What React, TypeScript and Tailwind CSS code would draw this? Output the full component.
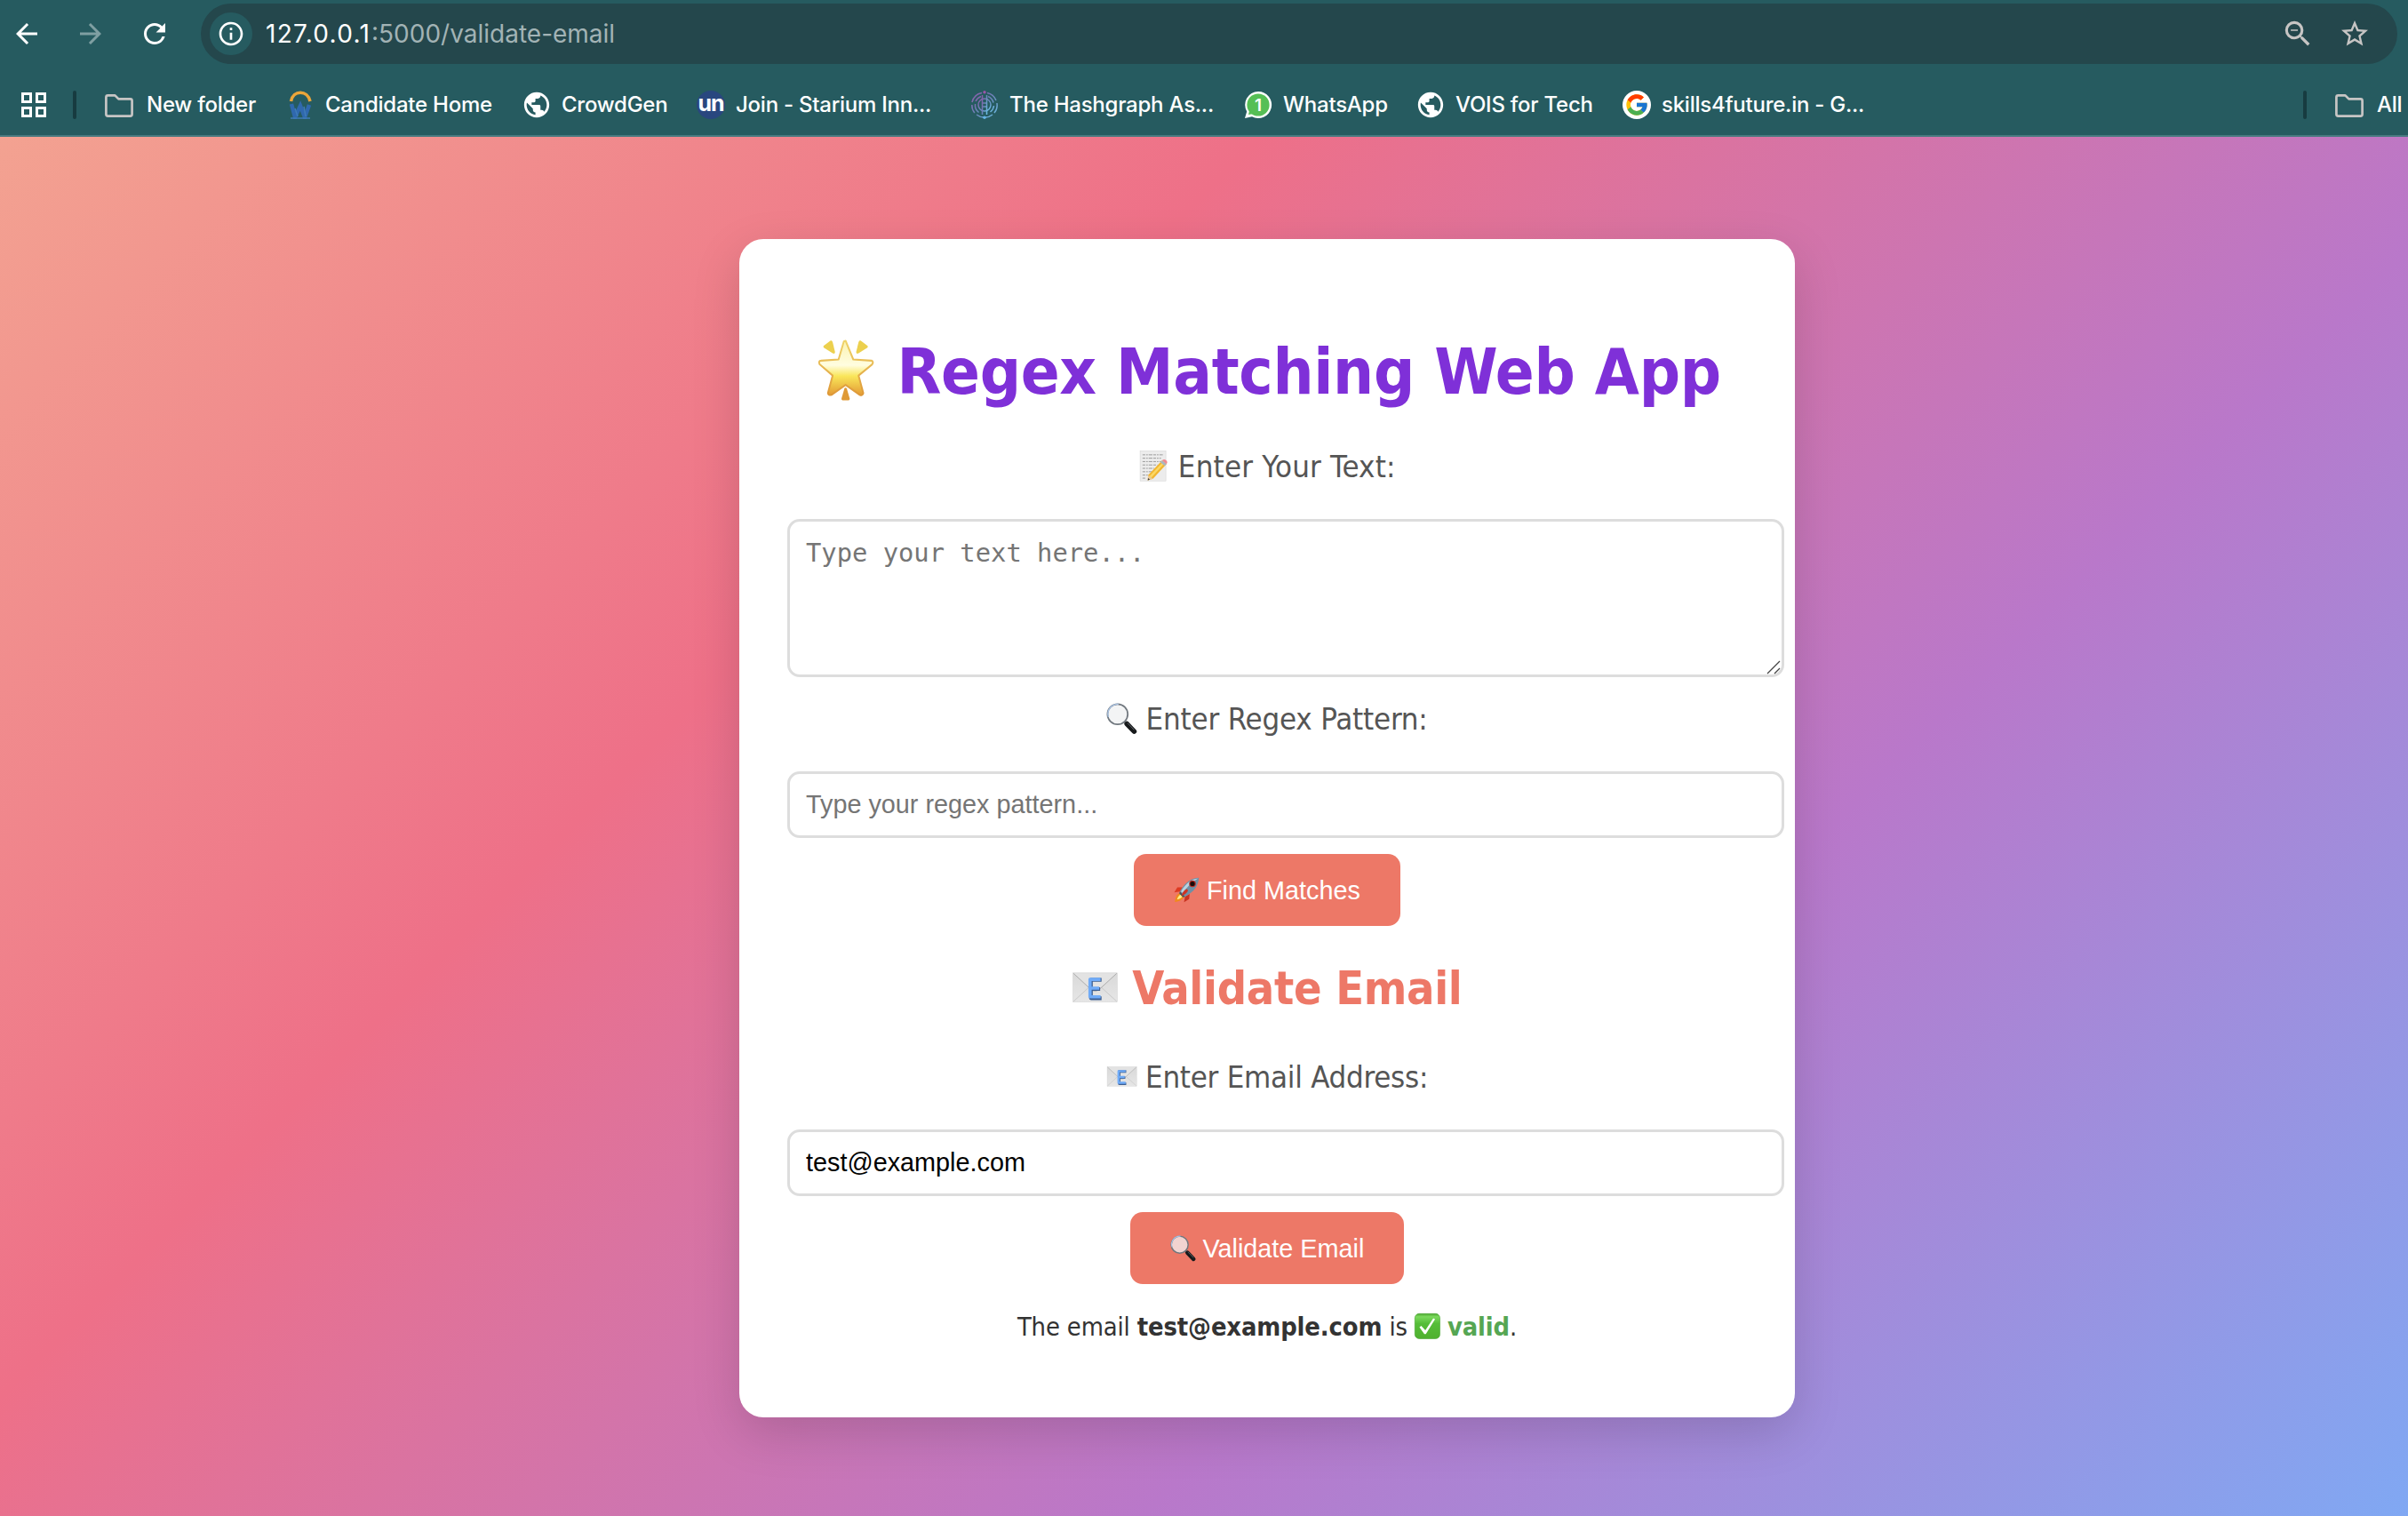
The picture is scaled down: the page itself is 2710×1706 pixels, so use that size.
import type { ReactNode } from "react";
import { MdArrowBack, MdArrowForward, MdInfoOutline, MdPublic, MdRefresh, MdStarOutline, MdZoomOut } from "react-icons/md";
import { FcGoogle } from "react-icons/fc";

const emojiBox = "inline-block h-[1em] w-[1em] align-[-0.125em] overflow-visible";

function GlowingStar() {
  return (
    <svg viewBox="0 0 100 100" className={emojiBox}>
      <defs>
        <linearGradient id="star-fill" x1="0" y1="0" x2="0" y2="1">
          <stop offset="0" stopColor="#fbf3b0" />
          <stop offset="0.45" stopColor="#fffde0" />
          <stop offset="0.65" stopColor="#f9e65a" />
          <stop offset="1" stopColor="#e39a34" />
        </linearGradient>
        <linearGradient id="star-edge" x1="0" y1="0" x2="0" y2="1">
          <stop offset="0" stopColor="#efd46a" />
          <stop offset="1" stopColor="#de9838" />
        </linearGradient>
      </defs>
      <g transform="translate(4 1) scale(0.92 0.97)">
        <path d="M51 4l13 30 31 2c3 1 3 4 1 6L73 60l8 28c0 4-4 4-6 3L51 75 27 91c-3 1-6 0-6-3l8-28L7 42c-2-3-1-6 2-6l30-2L48 5z" fill="url(#star-fill)" stroke="url(#star-edge)" strokeWidth="3" strokeLinejoin="round" />
        <path d="M14 12l11-8c2-1 3 0 4 2l4 16c0 3-2 3-4 2L14 15c-1-1-1-2 0-3z" fill="#ecd04e" />
        <path d="M88 12L77 4c-2-1-3 0-4 2l-4 16c0 3 2 3 4 2l15-9c1-1 1-2 0-3z" fill="#ecd04e" />
        <path d="M49 81c1-2 3-2 4 0l5 16c0 2-1 3-3 3h-8c-2 0-3-1-3-3z" fill="#df9a37" />
      </g>
    </svg>
  );
}

function Memo() {
  return (
    <svg viewBox="0 0 100 100" className={emojiBox}>
      <rect x="6" y="1" width="84" height="98" fill="#ececec" stroke="#d2d2d2" strokeWidth="1.5" />
      <g stroke="#8b8b8b" strokeWidth="2.4" strokeDasharray="9 3 5 3 12 3">
        <path d="M14 14h66M14 25h60M14 36h60M14 47h48M14 58h38M14 69h30M14 80h22M14 90h12" />
      </g>
      <path d="M32 80l46-48 14 12-44 48-17 5z" fill="#f2b631" />
      <path d="M36 84l46-48 5 4-45 49z" fill="#fbd865" />
      <path d="M32 80l16 12-17 5z" fill="#e9c99a" />
      <path d="M31 97l1-7 6 5z" fill="#3a3a3a" />
      <path d="M72 38l6-6 14 12-6 6z" fill="#a9b7c0" />
      <path d="M78 32c4-5 9-4 13 0s5 8 1 12z" fill="#ef8a93" />
    </svg>
  );
}

function Magnifier({ lens }: { lens: string }) {
  return (
    <svg viewBox="0 0 100 100" className={emojiBox}>
      <path d="M60 62l10 11" stroke="#8a8a8a" strokeWidth="7" />
      <path d="M67 68l24 25" stroke="#17191b" strokeWidth="16" strokeLinecap="round" />
      <path d="M70 66l20 21" stroke="#6f757a" strokeWidth="2.5" strokeLinecap="round" />
      <circle cx="37" cy="37" r="33" fill={lens} stroke="#70777e" strokeWidth="5" />
      <path d="M7 46A32 32 0 0 1 40 4" fill="none" stroke="#a9c3e4" strokeWidth="4" />
    </svg>
  );
}

function EmailEnvelope() {
  return (
    <svg viewBox="0 0 100 100" className={emojiBox}>
      <defs>
        <linearGradient id="paper" x1="0" y1="0" x2="0" y2="1">
          <stop offset="0" stopColor="#d9d9d9" />
          <stop offset="1" stopColor="#e6e6e6" />
        </linearGradient>
      </defs>
      <rect x="3" y="19" width="96" height="63" fill="url(#paper)" stroke="#cfcfcf" strokeWidth="1" />
      <path d="M4 81l36-33M98 81L62 48" stroke="#c3c3c3" strokeWidth="1.6" />
      <path d="M4 20l37 34q10 9 20 0l37-34" fill="#e3e3e3" stroke="#a9a9a9" strokeWidth="1.8" />
      <path d="M65 34H42v40h23M42 54h20" fill="none" stroke="#3d5f92" strokeWidth="8" strokeLinejoin="round" />
      <path d="M63 33H40v38h23M40 52h20" fill="none" stroke="#6fabf8" strokeWidth="7" strokeLinejoin="round" />
    </svg>
  );
}

function Rocket() {
  return (
    <svg viewBox="0 0 100 100" className={emojiBox}>
      <path d="M34 40L14 40 2 60l22-4z" fill="#dd3a22" />
      <path d="M62 66l-2 20-20 12 4-22z" fill="#c8321f" />
      <path d="M26 62C10 66 6 82 4 97c14-2 28-6 36-20z" fill="#f08a1c" />
      <path d="M28 68c-9 4-13 12-15 20 9-2 16-5 22-14z" fill="#fff08a" />
      <path d="M98 3C70 4 46 18 24 56l20 20C80 58 96 34 98 3z" fill="#6d90a6" />
      <path d="M96 5C70 8 48 22 28 56l6 6C56 34 76 16 96 5z" fill="#b9d3e0" />
      <path d="M24 56c-2 4-2 6-2 9l13 13c3 0 6-1 9-2z" fill="#46545e" />
      <circle cx="73" cy="26" r="13" fill="#b5271d" />
      <circle cx="73" cy="26" r="9" fill="#160c0c" />
      <path d="M50 46c-12 8-18 18-20 28 12-4 22-12 26-22z" fill="#cf3320" />
    </svg>
  );
}

function CheckBox() {
  return (
    <svg viewBox="0 0 100 100" className={emojiBox}>
      <defs>
        <linearGradient id="check-bg" x1="0" y1="0" x2="0" y2="1">
          <stop offset="0" stopColor="#49a52d" />
          <stop offset="0.12" stopColor="#7bd95c" />
          <stop offset="0.4" stopColor="#55bd38" />
          <stop offset="1" stopColor="#4fb02f" />
        </linearGradient>
      </defs>
      <rect x="1" y="1" width="98" height="98" rx="17" fill="url(#check-bg)" stroke="#43a02b" strokeWidth="2" />
      <path d="M19 54l7-5 16 17L73 19l7 4-36 58h-6z" fill="#fff" />
    </svg>
  );
}

function Folder() {
  return (
    <svg viewBox="0 0 32 32" className="h-8 w-8 shrink-0" fill="none" stroke="#c7c5c4" strokeWidth="2.7" strokeLinejoin="round">
      <path d="M3.4 5.4h8l4 4h13.2q2 0 2 2v15.2q0 2-2 2H3.4q-2 0-2-2V7.4q0-2 2-2z" />
    </svg>
  );
}

function CandidateLogo() {
  return (
    <svg viewBox="0 0 32 32" className="h-8 w-8 shrink-0" fill="none">
      <path d="M5.500 12C8 -1 24 -1 27 12" stroke="#eba53a" strokeWidth="3.6" />
      <path d="M6 15l4 15 6-13 5 13 5-14" stroke="#2f68ae" strokeWidth="4.5" />
      <path d="M10 20l3 9M20 18l2 11M5 31h22" stroke="#3f7cb8" strokeWidth="1.5" />
    </svg>
  );
}

function HashgraphLogo() {
  return (
    <svg viewBox="0 0 32 32" className="h-8 w-8 shrink-0" fill="none" strokeWidth="1.5">
      <defs>
        <linearGradient id="hash" x1="0" y1="0" x2="1" y2="1">
          <stop offset="0" stopColor="#8a5aa8" />
          <stop offset="0.5" stopColor="#6b84b8" />
          <stop offset="1" stopColor="#6cc0e6" />
        </linearGradient>
      </defs>
      <g stroke="url(#hash)">
        <path d="M13 2.6A14 14 0 0 0 2 13M1.8 16a14 14 0 0 0 3 9M7 27a14 14 0 0 0 8 3M19 2.6A14 14 0 0 1 29 11M30 14a14 14 0 0 1-3 11M25 27a14 14 0 0 1-8 3" />
        <path d="M12 6.5A10.5 10.5 0 0 0 6 12M5.5 15a10.5 10.5 0 0 0 4 9.5M20 6.5a10.5 10.5 0 0 1 6 7M26.5 17a10.5 10.5 0 0 1-4 7" />
        <circle cx="16" cy="16" r="7" />
        <path d="M13.5 5v22M18.5 5v22M13.5 14h5M13.5 18h5" />
      </g>
      <circle cx="16" cy="1.8" r="1.7" fill="#9a55a8" />
      <circle cx="16" cy="30.2" r="1.7" fill="#63b5e6" />
    </svg>
  );
}

function WhatsAppBadge() {
  return (
    <span className="relative flex h-8 w-8 shrink-0 items-center justify-center">
      <svg viewBox="0 0 32 32" className="absolute inset-0 h-8 w-8">
        <path d="M16 1a15 15 0 1 1-7 28.2L1 31l2.2-7.5A15 15 0 0 1 16 1z" fill="#fff" />
        <circle cx="16" cy="16" r="12.6" fill="#56bf55" />
        <path d="M5 27l1.5-6 5 5z" fill="#56bf55" />
      </svg>
      <span className="relative text-[19px] leading-none font-semibold text-white">1</span>
    </span>
  );
}

function UnBadge() {
  return (
    <span className="flex h-8 w-8 shrink-0 items-center justify-center rounded-full bg-[#29477f] pb-[3px] text-[25px] leading-none font-bold tracking-[-1px] text-white">
      un
    </span>
  );
}

function Globe() {
  return (
    <span className="flex h-8 w-8 shrink-0 items-center justify-center text-white">
      <MdPublic size={34} className="shrink-0" />
    </span>
  );
}

function GoogleBadge() {
  return (
    <span className="flex h-8 w-8 shrink-0 items-center justify-center rounded-full bg-white">
      <FcGoogle size={28} />
    </span>
  );
}

function Bookmark({ icon, label, className }: { icon: ReactNode; label: string; className: string }) {
  return (
    <div className={`flex shrink-0 items-center gap-3 ${className}`}>
      {icon}
      <span className="whitespace-nowrap">{label}</span>
    </div>
  );
}

function BrowserChrome() {
  return (
    <header className="h-[154px] border-b-2 border-[#487a80] bg-[#265b60] font-['Inter',sans-serif] text-white">
      <div className="flex h-[76px] items-center">
        <MdArrowBack size={36} className="ml-3 shrink-0" />
        <MdArrowForward size={36} className="ml-9 shrink-0 text-[#7f9fa2]" />
        <MdRefresh size={36} className="ml-9 shrink-0" />
        <div className="ml-[34px] flex h-[68px] w-[2472px] items-center rounded-full bg-[#24474c] pr-[30px] pl-[10px]">
          <span className="flex h-12 w-12 items-center justify-center rounded-full bg-[#265b60]">
            <MdInfoOutline size={32} />
          </span>
          <span className="ml-[15px] flex text-[28px] leading-none whitespace-nowrap">
            <span className="w-[119px] tracking-[1.3px] text-white">127.0.0.1</span>
            <span className="text-[#a2b3b5]">:5000/validate-email</span>
          </span>
          <MdZoomOut size={38} className="ml-auto text-[#c7c5c4]" />
          <MdStarOutline size={36} className="ml-[27px] text-[#c7c5c4]" />
        </div>
      </div>
      <div className="flex h-[76px] items-center overflow-hidden pt-2 text-[24px] leading-none font-medium tracking-[-0.24px]">
        <svg viewBox="0 0 28 28" className="ml-6 h-7 w-7 shrink-0" fill="none" stroke="#fff" strokeWidth="3">
          <path d="M1.5 1.5h9v9h-9zM17.5 1.5h9v9h-9zM1.5 17.5h9v9h-9zM17.5 17.5h9v9h-9z" />
        </svg>
        <div className="mr-8 ml-[30px] h-8 w-1 shrink-0 rounded-full bg-[#173b40]" />
        <Bookmark icon={<span className="mr-[3px]"><Folder /></span>} label="New folder" className="w-[204px]" />
        <Bookmark icon={<CandidateLogo />} label="Candidate Home" className="w-[266px]" />
        <Bookmark icon={<Globe />} label="CrowdGen" className="w-[196px]" />
        <Bookmark icon={<UnBadge />} label="Join - Starium Inn..." className="w-[308px]" />
        <Bookmark icon={<HashgraphLogo />} label="The Hashgraph As..." className="w-[308px]" />
        <Bookmark icon={<WhatsAppBadge />} label="WhatsApp" className="w-[194px]" />
        <Bookmark icon={<Globe />} label="VOIS for Tech" className="w-[232px]" />
        <Bookmark icon={<GoogleBadge />} label="skills4future.in - G..." className="w-[300px]" />
        <div className="mr-8 ml-auto h-8 w-1 shrink-0 rounded-full bg-[#173b40]" />
        <Bookmark icon={<span className="mr-[3px]"><Folder /></span>} label="All" className="w-[82px]" />
      </div>
    </header>
  );
}

const fieldClass =
  "ml-[54px] block w-[1122px] rounded-[14px] border-3 border-[#dddddd] bg-white px-[18px] text-[28.8px] text-black placeholder:text-[#757575] outline-none";
const buttonClass =
  "mt-[18px] h-[81px] rounded-[14px] bg-[#ed7867] font-['Liberation_Sans',sans-serif] text-[28.8px] leading-none text-white";

function FieldLabel({ icon, text, className }: { icon: ReactNode; text: string; className: string }) {
  return (
    <label className={`block text-center text-[34.56px] leading-[42px] text-[#555555] ${className}`}>
      {icon} {text}
    </label>
  );
}

function RegexCard() {
  return (
    <main className="mt-[115px] h-[1326px] w-[1188px] rounded-[27px] bg-white font-['DejaVu_Sans_Condensed','DejaVu_Sans',sans-serif] text-[#333333] shadow-[0_18px_54px_rgba(0,0,0,0.15)]">
      <h1 className="pt-[105px] text-center text-[72px] leading-[88px] font-bold tracking-[-0.3px] text-[#7f30d8]">
        <GlowingStar /> Regex Matching Web App
      </h1>
      <FieldLabel icon={<Memo />} text="Enter Your Text:" className="mt-[42px] tracking-[0.2px]" />
      <div className="relative mt-[38px]">
        <textarea
          placeholder="Type your text here..."
          className={`${fieldClass} h-[178px] resize-none pt-[18px] font-['DejaVu_Sans_Mono',monospace] leading-[34px]`}
        />
        <svg viewBox="0 0 16 16" className="absolute right-[16px] bottom-[3px] h-4 w-4" stroke="#444" strokeWidth="1.3">
          <path d="M1 15L15 1M9 15l6-6" />
        </svg>
      </div>
      <FieldLabel icon={<Magnifier lens="#f3f4f5" />} text="Enter Regex Pattern:" className="mt-[26px] tracking-[-0.2px]" />
      <input
        placeholder="Type your regex pattern..."
        className={`${fieldClass} mt-[38px] h-[75px] font-['Liberation_Sans',sans-serif]`}
      />
      <div className="text-center">
        <button className={`${buttonClass} w-[300px]`}>
          <Rocket /> Find Matches
        </button>
      </div>
      <h2 className="mt-[38px] text-center text-[51.84px] leading-[64px] font-bold tracking-[-0.3px] text-[#ed7867]">
        <EmailEnvelope /> Validate Email
      </h2>
      <FieldLabel icon={<EmailEnvelope />} text="Enter Email Address:" className="mt-[47px] tracking-[-0.27px]" />
      <input
        defaultValue="test@example.com"
        className={`${fieldClass} mt-[38px] h-[75px] font-['Liberation_Sans',sans-serif]`}
      />
      <div className="text-center">
        <button className={`${buttonClass} w-[308px]`}>
          <Magnifier lens="#f2d3d0" /> Validate Email
        </button>
      </div>
      <p className="mt-[30px] text-center text-[28.8px] leading-[36px] tracking-[-0.12px]">
        The email <strong>test@example.com</strong> is <CheckBox />{" "}
        <strong className="text-[#55a653]">valid</strong>.
      </p>
    </main>
  );
}

export default function App() {
  return (
    <div className="h-[1706px] w-[2710px] overflow-hidden">
      <BrowserChrome />
      <div className="flex h-[1552px] bg-[linear-gradient(135deg,#f3a291_0%,#ee7088_33.3%,#b978ca_66.6%,#80a8f3_100%)] pl-[832px]">
        <RegexCard />
      </div>
    </div>
  );
}
